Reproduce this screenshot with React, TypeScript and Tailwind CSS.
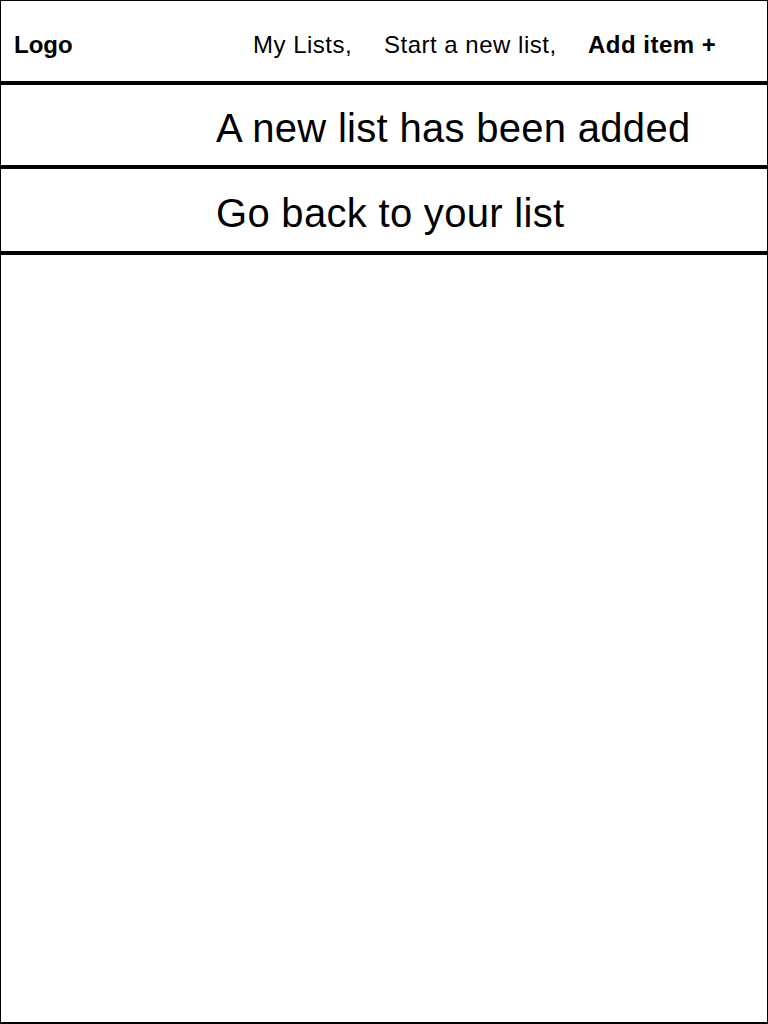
import type { ReactNode } from 'react';

const NAV = [
  { label: 'My Lists,', width: 'w-[131px]', bold: false },
  { label: 'Start a new list,', width: 'w-[204px]', bold: false },
  { label: 'Add item +', width: 'w-auto', bold: true },
];

function Rule() {
  return <div className="h-[4px] w-full bg-black" />;
}

function Row({ children, height }: { children: ReactNode; height: string }) {
  return (
    <div className={`flex ${height} items-center pl-[215px] pt-[6px] text-[40px] tracking-[0.3px] text-black`}>
      {children}
    </div>
  );
}

export default function App() {
  return (
    <div className="h-[1024px] w-[768px] border border-b-2 border-black bg-white font-['Liberation_Sans',Arial,sans-serif]">
      <header className="flex h-[80px] items-center pl-[13px] pt-[7px] text-[24px] tracking-[0.5px] text-black">
        <span className="w-[239px] font-bold tracking-normal">Logo</span>
        {NAV.map((item) => (
          <span key={item.label} className={`${item.width} ${item.bold ? 'font-bold' : ''}`}>
            {item.label}
          </span>
        ))}
      </header>
      <Rule />
      <Row height="h-[80px]">A new list has been added</Row>
      <Rule />
      <Row height="h-[82px]">Go back to your list</Row>
      <Rule />
    </div>
  );
}
